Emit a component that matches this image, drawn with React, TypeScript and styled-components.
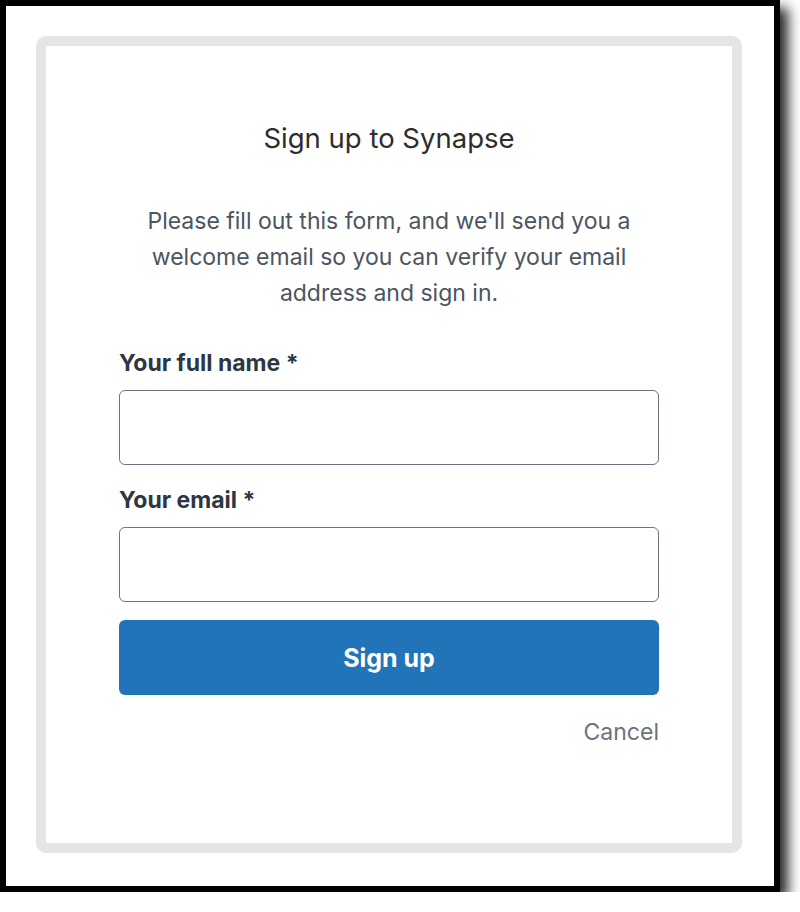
import React from "react";
import styled, { createGlobalStyle } from "styled-components";

const Global = createGlobalStyle`
  html, body { margin: 0; padding: 0; background: #ffffff; }
  body { font-family: Inter, "Noto Sans", "Liberation Sans", sans-serif; }
  * { box-sizing: border-box; }
`;

const Frame = styled.div`
  width: 780px;
  height: 892px;
  border: 6px solid #000;
  background: #fff;
  box-shadow: 8px 8px 12px rgba(0, 0, 0, 0.85);
  padding: 30px 0 0 30px;
`;

const Card = styled.div`
  width: 706px;
  height: 817px;
  border: 10px solid #e5e5e5;
  border-radius: 10px;
  background: #fff;
  padding-top: 76px;
  display: flex;
  flex-direction: column;
  align-items: center;
`;

const Title = styled.h1`
  margin: 0;
  font-size: 27.5px;
  line-height: 32px;
  font-weight: 400;
  color: #2d2d2d;
`;

const Intro = styled.p`
  margin: 49px 0 0;
  width: 520px;
  text-align: center;
  font-size: 23px;
  line-height: 36px;
  color: #4b5563;
`;

const Form = styled.form`
  width: 540px;
  margin-top: 38px;
  display: flex;
  flex-direction: column;
`;

const Label = styled.label<{ $gap?: number }>`
  display: block;
  margin-top: ${(p) => p.$gap ?? 0}px;
  font-size: 23px;
  line-height: 28px;
  font-weight: 700;
  color: #2d3642;
`;

const Input = styled.input`
  margin-top: 13px;
  width: 540px;
  height: 75px;
  border: 1px solid #6b7280;
  border-radius: 6px;
  background: #fff;
  font-size: 20px;
  padding: 0 14px;
  outline: none;
`;

const Submit = styled.button`
  margin-top: 18px;
  width: 540px;
  height: 75px;
  border: none;
  border-radius: 6px;
  background: #2274b9;
  color: #fff;
  font-family: inherit;
  font-size: 25px;
  font-weight: 700;
  cursor: pointer;
`;

const CancelRow = styled.div`
  margin-top: 23px;
  display: flex;
  justify-content: flex-end;
`;

const CancelLink = styled.a`
  font-size: 23px;
  line-height: 28px;
  color: #6b7280;
  text-decoration: none;
  cursor: pointer;
`;

export default function App() {
  return (
    <>
      <Global />
      <Frame>
        <Card>
          <Title>Sign up to Synapse</Title>
          <Intro>
            Please fill out this form, and we'll send you a welcome email so you can verify your email address and sign in.
          </Intro>
          <Form onSubmit={(e) => e.preventDefault()}>
            <Label htmlFor="name">Your full name *</Label>
            <Input id="name" type="text" />
            <Label htmlFor="email" $gap={21}>Your email *</Label>
            <Input id="email" type="email" />
            <Submit type="submit">Sign up</Submit>
            <CancelRow>
              <CancelLink>Cancel</CancelLink>
            </CancelRow>
          </Form>
        </Card>
      </Frame>
    </>
  );
}
